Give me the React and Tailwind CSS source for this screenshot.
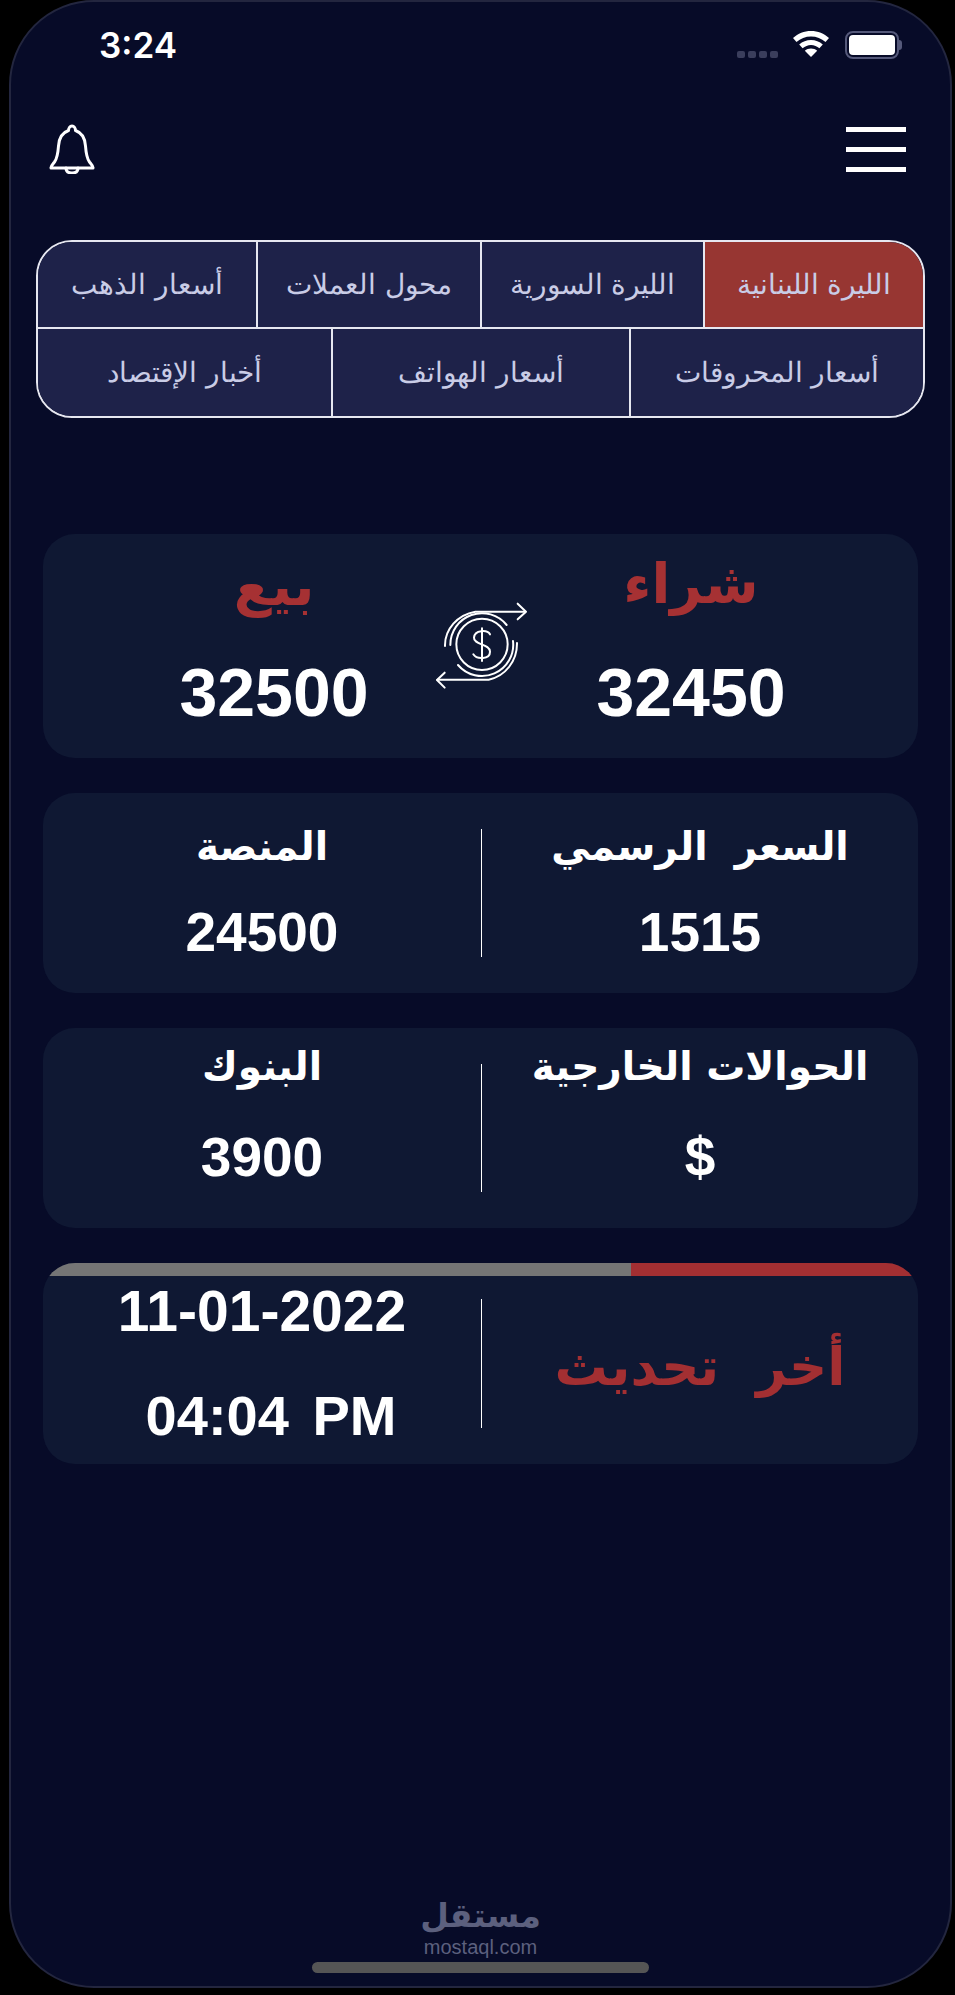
const ar = "font-['DejaVu_Sans',sans-serif]";
const num = "font-['Liberation_Sans',Arial,sans-serif] font-bold text-white";

function Bell() {
  return (
    <svg width="46" height="50" viewBox="0 0 46 50" fill="none" stroke="white" strokeWidth="3" strokeLinejoin="round" strokeLinecap="round">
      <path d="M23 2c-2 0-3.500 2-3.500 4.500C12 9 10 15 9.500 22c-.5 7-1 12-4 16-2 2.500-3.500 4-3.500 5.500v.5h42v-.5c0-1.500-1.500-3-3.500-5.500-3-4-3.500-9-4-16-.5-7-2.500-13-10-15.500C26.500 4 25 2 23 2z" />
      <path d="M17 44c0 3.500 2.500 5 6 5s6-1.500 6-5" />
    </svg>
  );
}

function Wifi() {
  return (
    <svg width="36" height="26" viewBox="0 0 36 26" fill="white">
      <path d="M18 0C11 0 5 2.600 0 7l3.500 4C7.500 7.500 12.500 5.500 18 5.500S28.500 7.500 32.500 11L36 7C31 2.600 25 0 18 0z" />
      <path d="M18 9c-4.500 0-8.500 1.700-11.800 4.500l3.400 3.800C12 15.300 14.900 14 18 14s6 1.300 8.400 3.300l3.400-3.800C26.500 10.700 22.500 9 18 9z" />
      <path d="M18 17.500c-2.400 0-4.500.9-6.200 2.300L18 26l6.200-6.200c-1.700-1.400-3.800-2.300-6.200-2.300z" />
    </svg>
  );
}

function Battery() {
  return (
    <div className="flex items-center">
      <div className="w-[54px] h-[28px] rounded-[8px] border-2 border-[#55597a] p-[2px]">
        <div className="w-full h-full rounded-[4px] bg-white" />
      </div>
      <div className="w-[3px] h-[10px] rounded-r-sm bg-[#55597a]" />
    </div>
  );
}

function Exchange() {
  return (
    <svg className="mr-[4px]" width="100" height="100" viewBox="95 45 300 300" fill="none" stroke="white" strokeWidth="6" strokeLinecap="round" strokeLinejoin="round">
      <circle cx="248" cy="190" r="77" />
      <path d="M153 192A95 95 0 0 1 322 132" />
      <path d="M341 180A94 94 0 0 1 176 252" />
      <path d="M137 195A111 103 0 0 1 228 92H378" />
      <path d="M355 68L380 92L355 115" />
      <path d="M353 186A105 110 0 0 1 268 296H114" />
      <path d="M136 275L113 297L136 320" />
      <path d="M272 160C264 146 226 146 224 170C222 192 272 188 272 212C272 236 232 236 222 220" />
      <path d="M248 142V240" />
    </svg>
  );
}

function Tab({ label, active, className }) {
  return (
    <div className={`flex items-center justify-center h-full ${active ? 'bg-[#973632]' : 'bg-[#1e2249]'} ${className}`}>
      <span dir="rtl" className={`${ar} font-extralight text-[28px] text-[#c9cce6]`}>{label}</span>
    </div>
  );
}

function SplitCard({ rightLabel, rightValue, leftLabel, leftValue, colClass }) {
  return (
    <div className="flex items-center h-[200px] rounded-[32px] bg-[#0f1833]">
      <div className={`w-[438px] self-start flex flex-col items-center ${colClass}`}>
        <span dir="rtl" className={`${ar} font-bold text-white text-[39px] leading-[50px]`}>{leftLabel}</span>
        <span className={`${num} text-[55px] leading-[60px]`}>{leftValue}</span>
      </div>
      <div className="w-px h-[128px] bg-white shrink-0" />
      <div className={`flex-1 self-start flex flex-col items-center ${colClass}`}>
        <span dir="rtl" className={`${ar} font-bold text-white text-[39px] leading-[50px]`}>{rightLabel}</span>
        <span className={`${num} text-[55px] leading-[60px]`}>{rightValue}</span>
      </div>
    </div>
  );
}

export default function App() {
  return (
    <div className="w-[955px] h-[1995px] bg-black overflow-hidden pl-[9px] pr-[3px] pb-[7px]">
      <div className="h-full flex flex-col rounded-[85px] border-2 border-[#23263f] bg-[#070b28]">
        {/* status bar */}
        <div className="flex items-center h-[34px] mt-[26px] pl-[88px] pr-[48px]">
          <span className="font-['Inter',sans-serif] font-semibold text-white text-[35px] leading-none">3:24</span>
          <div className="ml-auto flex items-end gap-[3px] self-end pb-[4px]">
            {[0, 1, 2, 3].map(i => <div key={i} className="w-[8px] h-[7px] rounded-[2px] bg-[#3a3e5c]" />)}
          </div>
          <div className="ml-[15px] -mt-[2px]"><Wifi /></div>
          <div className="ml-[16px]"><Battery /></div>
        </div>

        {/* header */}
        <div className="flex items-start justify-between mt-[62px] pl-[38px] pr-[44px]">
          <Bell />
          <div className="flex flex-col gap-[15px] mt-[3px]">
            <div className="w-[60px] h-[5px] bg-white" />
            <div className="w-[60px] h-[5px] bg-white" />
            <div className="w-[60px] h-[5px] bg-white" />
          </div>
        </div>

        {/* tabs */}
        <div className="mt-[66px] mx-[25px] h-[178px] rounded-[36px] border-2 border-[#e6e7f0] overflow-hidden flex flex-col">
          <div className="flex h-[87px] border-b-2 border-[#e6e7f0]">
            <Tab className="w-[220px] border-r-2 border-[#e6e7f0]" label="أسعار الذهب" />
            <Tab className="w-[224px] border-r-2 border-[#e6e7f0]" label="محول العملات" />
            <Tab className="w-[223px] border-r-2 border-[#e6e7f0]" label="الليرة السورية" />
            <Tab className="flex-1" active label="الليرة اللبنانية" />
          </div>
          <div className="flex flex-1">
            <Tab className="w-[295px] border-r-2 border-[#e6e7f0]" label="أخبار الإقتصاد" />
            <Tab className="w-[298px] border-r-2 border-[#e6e7f0]" label="أسعار الهواتف" />
            <Tab className="flex-1" label="أسعار المحروقات" />
          </div>
        </div>

        {/* cards */}
        <div className="mt-[116px] mx-[32px] flex flex-col gap-[35px]">
          <div className="flex items-center justify-between h-[224px] rounded-[32px] bg-[#0f1833] pl-[81px] pr-[77px]">
            <div className="w-[300px] self-start pt-[12px] flex flex-col items-center">
              <span dir="rtl" className={`${ar} font-bold text-[#a63133] text-[55px] leading-[80px]`}>بيع</span>
              <span className={`${num} text-[68px] leading-[76px] mt-[28px]`}>32500</span>
            </div>
            <Exchange />
            <div className="w-[300px] self-start pt-[10px] flex flex-col items-center">
              <span dir="rtl" className={`${ar} font-bold text-[#a63133] text-[55px] leading-[80px]`}>شراء</span>
              <span className={`${num} text-[68px] leading-[76px] mt-[30px]`}>32450</span>
            </div>
          </div>

          <SplitCard colClass="pt-[29px] gap-[30px]" rightLabel={'السعر\u00a0\u00a0الرسمي'} rightValue="1515" leftLabel="المنصة" leftValue="24500" />
          <SplitCard colClass="pt-[14px] gap-[35px]" rightLabel="الحوالات الخارجية" rightValue="$" leftLabel="البنوك" leftValue="3900" />

          <div className="h-[201px] rounded-[32px] bg-[#0f1833] overflow-hidden flex flex-col">
            <div className="flex h-[13px] mx-[4px] shrink-0">
              <div className="w-[584px] bg-[#757575] rounded-tl-[24px]" />
              <div className="flex-1 bg-[#a32f32] rounded-tr-[24px]" />
            </div>
            <div className="flex flex-1 items-center">
              <div className="w-[438px] flex flex-col items-center gap-[45px] -mt-[14px]">
                <span className={`${num} text-[57px] leading-[60px]`}>11-01-2022</span>
                <span className={`${num} text-[56px] leading-[60px] ml-[18px] [word-spacing:8px]`}>04:04 PM</span>
              </div>
              <div className="w-px h-[129px] bg-white shrink-0 -mt-[13px]" />
              <div className="flex-1 flex justify-center -mt-[7px]">
                <span dir="rtl" className={`${ar} font-bold text-[#a32f32] text-[53px] leading-[80px]`}>{'أخر\u00a0\u00a0تحديث'}</span>
              </div>
            </div>
          </div>
        </div>

        {/* watermark + home bar */}
        <div className="mt-auto flex flex-col items-center pb-[13px]">
          <span dir="rtl" className={`${ar} font-bold text-[#5c607e] text-[33px] leading-[40px] mb-[1px]`}>مستقل</span>
          <span className="font-['Liberation_Sans',sans-serif] text-[#5c607e] text-[20px] leading-[20px]">mostaql.com</span>
          <div className="w-[337px] h-[11px] rounded-full bg-[#555555] mt-[5px]" />
        </div>
      </div>
    </div>
  );
}
